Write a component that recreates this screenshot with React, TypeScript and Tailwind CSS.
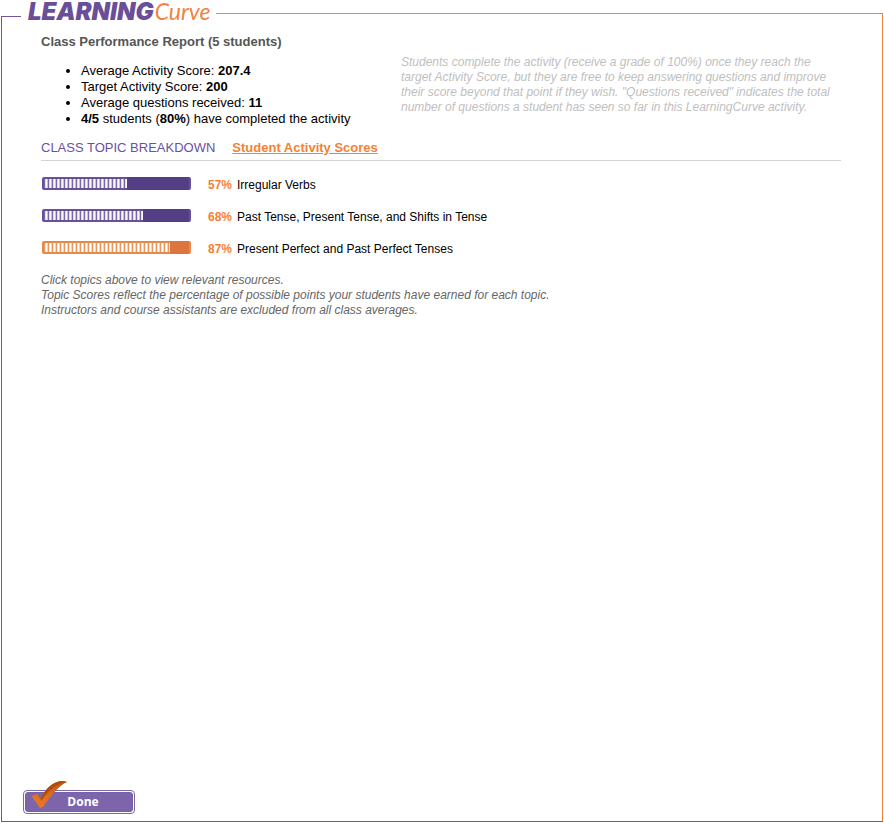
const sans = 'font-["Liberation_Sans",Arial,sans-serif]';

type Topic = { name: string; score: number; fill: string; frame: string; track: string };

const purple = { frame: 'bg-[#6750a0]', track: 'bg-[#543f87]', fill: 'bg-[#6750a0]' };
const orange = { frame: 'bg-[#e58a48]', track: 'bg-[#de7540]', fill: 'bg-[#e58a48]' };

const topics: Topic[] = [
  { name: 'Irregular Verbs', score: 57, ...purple },
  { name: 'Past Tense, Present Tense, and Shifts in Tense', score: 68, ...purple },
  { name: 'Present Perfect and Past Perfect Tenses', score: 87, ...orange },
];

function Meter({ topic }: { topic: Topic }) {
  return (
    <div
      role="meter"
      aria-label={topic.name}
      aria-valuenow={topic.score}
      aria-valuemin={0}
      aria-valuemax={100}
      className={`h-[13px] w-[149px] shrink-0 rounded-xs px-[2px] ${topic.frame}`}
    >
      <div className={`h-full ${topic.track}`}>
        <div className={`h-full py-[2px] ${topic.fill}`} style={{ width: `${topic.score}%` }}>
          <div className="h-full bg-[repeating-linear-gradient(90deg,#ffffff20_0px,#ffffff20_1px,#ffffffc8_1px,#ffffffc8_2px,#fff_2px,#fff_3px,#ffffffa0_3px,#ffffffa0_4px)]" />
        </div>
      </div>
    </div>
  );
}

function Header() {
  return (
    <header className="flex h-6 shrink-0">
      <div className="mt-4 w-5 border-t border-l border-[#6f569f]" />
      <h1 className="mr-[5px] ml-[7px] flex items-baseline gap-px whitespace-nowrap leading-[22px] italic">
        <span className="font-['Inter',sans-serif] text-2xl leading-[22px] font-black text-[#6a4f98]">LEARNING</span>
        <span className="font-['Lato',sans-serif] text-[23px] leading-[22px] text-[#f08443]">Curve</span>
      </h1>
      <div className="mt-[13px] flex-1 border-t border-r border-[#f58133]" />
    </header>
  );
}

function DoneButton() {
  return (
    <button
      type="button"
      className="relative h-6 w-28 rounded-[4px] border border-[#7d68a8] bg-white p-px font-['Open_Sans',sans-serif] text-xs font-bold text-white"
    >
      <span className="flex h-full items-center justify-center rounded-[3px] border border-[#7460a8] bg-[#7d65ab] pl-2">
        Done
      </span>
      <svg className="absolute -top-[11px] left-1.5" width="40" height="32" viewBox="0 0 40 32" aria-hidden="true">
        <defs>
          <linearGradient id="tick" x1="0" y1="1" x2="1" y2="0">
            <stop offset="0" stopColor="#ef7a2a" />
            <stop offset="0.5" stopColor="#dc6c1f" />
            <stop offset="1" stopColor="#b9530f" />
          </linearGradient>
        </defs>
        <path d="M1.5 16 L7 14 L11 18.5 C15 9 23 1 33 1 L37 2 C28 6 20 17 13 27 L10 28 Z" fill="url(#tick)" />
        <path d="M7 14 L11 18.5 C15 9 23 1 33 1 L37 2 C27 3 18 11 11.5 20.5 Z" fill="#b04d0e" />
      </svg>
    </button>
  );
}

export default function App() {
  return (
    <div className={`flex min-h-screen flex-col bg-white px-px pb-px text-black ${sans}`}>
      <Header />
      <main className="flex flex-1 flex-col border-r border-b border-l border-r-[#f58133] border-b-[#6f569f] border-l-[#6f569f] pr-[41px] pb-[7px] pl-[39px]">
        <section className="flex">
          <div className="w-[360px] shrink-0 pt-[10px]">
            <h2 className="text-[13px] leading-4 font-bold text-[#555]">Class Performance Report (5 students)</h2>
            <ul className="mt-[13px] list-disc pl-10 text-[13px] leading-4">
              <li>Average Activity Score: <b>207.4</b></li>
              <li>Target Activity Score: <b>200</b></li>
              <li>Average questions received: <b>11</b></li>
              <li><b>4/5</b> students (<b>80%</b>) have completed the activity</li>
            </ul>
          </div>
          <p className="flex-1 pt-[31px] text-xs leading-[15px] text-[#c0c0c0] italic">
            Students complete the activity (receive a grade of 100%) once they reach the target Activity Score, but
            they are free to keep answering questions and improve their score beyond that point if they wish.
            "Questions received" indicates the total number of questions a student has seen so far in this
            LearningCurve activity.
          </p>
        </section>

        <nav className="mt-2 flex gap-[17px] border-b border-[#d3d3d3] pt-[5px] pb-1 text-[13px] leading-4">
          <span className="text-[#6a51a3]">CLASS TOPIC BREAKDOWN</span>
          <a href="#scores" className="font-bold text-[#f58133] underline">Student Activity Scores</a>
        </nav>

        <ul className="mt-4 flex flex-col gap-4 pl-px text-xs leading-4">
          {topics.map((topic) => (
            <li key={topic.name} className="flex items-start">
              <Meter topic={topic} />
              <b className="ml-[17px] w-[29px] text-[#f58133]">{topic.score}%</b>
              <span>{topic.name}</span>
            </li>
          ))}
        </ul>

        <p className="mt-4 text-xs leading-[15px] text-[#666] italic">
          Click topics above to view relevant resources.
          <br />
          Topic Scores reflect the percentage of possible points your students have earned for each topic.
          <br />
          Instructors and course assistants are excluded from all class averages.
        </p>

        <div className="mt-auto -ml-[18px]">
          <DoneButton />
        </div>
      </main>
    </div>
  );
}
